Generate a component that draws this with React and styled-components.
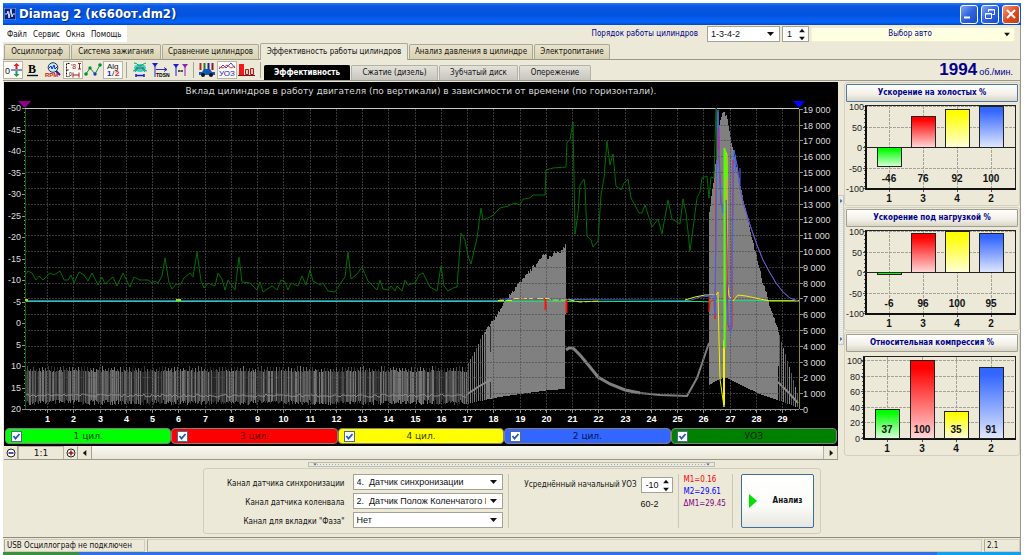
import React, { useState } from 'react';
import styled, { createGlobalStyle } from 'styled-components';

const small = "8px/12px 'DejaVu Sans Condensed', 'DejaVu Sans', Tahoma, sans-serif";

const GlobalStyle = createGlobalStyle`
  * {
    box-sizing: border-box;
  }
  body {
    margin: 0;
    background: #fff;
    font-family: 'Liberation Sans', Arial, sans-serif;
    font-size: 9px;
    line-height: 12px;
    color: #111;
  }
  button, input, select {
    font: inherit;
    color: inherit;
    margin: 0;
    padding: 0;
    border: 0;
    border-radius: 0;
  }
`;

const Window = styled.div`
  display: flex;
  flex-direction: column;
  min-height: 100vh;
  padding: 3px 3px 0;
  background: #fff;
`;

const TitleBar = styled.header`
  display: flex;
  align-items: center;
  gap: 3px;
  height: 22px;
  padding: 0 1px;
  background: linear-gradient(#2a7df5 0, #0a57e0 3px, #0353de 12px, #0564fc 19px, #0246c4 22px);
`;

const Title = styled.h1`
  flex: 1;
  margin: 0;
  color: #fff;
  font: bold 13px/20px 'DejaVu Sans Condensed', 'DejaVu Sans', sans-serif;
  text-shadow: 1px 1px 1px #0a2d80;
`;

const WindowButton = styled.button`
  display: flex;
  align-items: center;
  justify-content: center;
  width: 18px;
  height: 19px;
  border: 1px solid #fff;
  border-radius: 3px;
  background: ${props => (props.$close ? 'linear-gradient(135deg, #f09a7c, #dd4f26 50%, #c23a12)' : 'linear-gradient(135deg, #7ea4f4, #2f63dd 50%, #1c4cc4)')};
`;

const Body = styled.div`
  display: flex;
  flex-direction: column;
  flex: 1;
  background: #ece9d8;
  border-right: 1px solid #9a988c;
`;

const MenuRow = styled.div`
  display: flex;
  align-items: flex-start;
  height: 18px;
`;

const Menu = styled.nav`
  display: flex;
  align-items: center;
  gap: 6px;
  width: 124px;
  height: 17px;
  padding: 2px 4px 0;
  background: #fff;
  font: ${small};
`;

const MenuItem = styled.button`
  background: none;
  white-space: nowrap;
`;

const MenuTools = styled.div`
  display: flex;
  flex: 1;
  justify-content: flex-end;
  align-items: center;
  gap: 2px;
  height: 16px;
  padding: 2px 5px 0 0;
`;

const OrderLabel = styled.label`
  margin-right: 7px;
  color: #00008b;
  font: ${small};
`;

const SelectBox = styled.div`
  display: grid;
  align-items: center;
  width: ${props => props.$width};
  height: 16px;
  border: 1px solid #a5a294;
  background: #fff;

  & > * {
    grid-area: 1 / 1;
  }
  svg {
    justify-self: end;
    margin-right: 5px;
    pointer-events: none;
  }
`;

const Select = styled.select`
  appearance: none;
  width: 100%;
  height: 14px;
  padding: 0 16px 0 3px;
  background: none;
  text-overflow: clip;
`;

const SpinBox = styled.div`
  display: flex;
  align-items: center;
  width: ${props => props.$width};
  height: 16px;
  padding: 0 3px 0 4px;
  border: 1px solid #a5a294;
  background: #fff;
`;

const SpinInput = styled.input`
  flex: 1;
  min-width: 0;
  background: none;
`;

const SpinButtons = styled.div`
  display: flex;
  flex-direction: column;
  gap: 3px;
`;

const SpinButton = styled.button`
  display: flex;
  background: none;
`;

const CarButton = styled.button`
  display: flex;
  align-items: center;
  width: 204px;
  height: 15px;
  padding: 0 4px;
  background: #ffffe1;
  border: 1px solid #f3f0d0;
  border-radius: 2px;
  color: #00008b;
  font: ${small};

  span {
    flex: 1;
  }
`;

const TabBar = styled.div`
  display: flex;
  align-items: flex-end;
  gap: 1px;
  height: 17px;
  padding-left: 1px;
  border-bottom: 1px solid #9a988c;
`;

const Tab = styled.button`
  width: ${props => props.$width};
  height: ${props => (props.$active ? '17px' : '15px')};
  margin-bottom: ${props => (props.$active ? '-1px' : '0')};
  border: 1px solid #aaa798;
  border-bottom: 0;
  border-radius: 2px 2px 0 0;
  background: ${props => (props.$active ? '#ece9d8' : 'linear-gradient(#e9e4cd, #d8d1b0)')};
  font: ${small};
  white-space: nowrap;
`;

const Toolbar = styled.div`
  display: flex;
  align-items: stretch;
  height: 21px;
  border-bottom: 1px solid #9a988c;
`;

const Tool = styled.button`
  display: flex;
  align-items: center;
  justify-content: center;
  width: 20px;
  height: 18px;
  margin-top: 1px;
  background: ${props => (props.$pressed ? '#faf9f4' : 'none')};
  border: 1px solid ${props => (props.$pressed ? '#b9b6a6' : 'transparent')};
`;

const Divider = styled.div`
  width: 1px;
  margin: 2px 3px;
  background: #a8a597;
`;

const SubTabs = styled.div`
  display: flex;
  align-items: flex-end;
  gap: 1px;
  flex: 1;
`;

const SubTab = styled.button`
  width: ${props => props.$width};
  height: 15px;
  border: 1px solid ${props => (props.$active ? '#000' : '#b4b2a8')};
  border-bottom: 0;
  border-radius: 2px 2px 0 0;
  background: ${props => (props.$active ? '#000' : 'linear-gradient(#e2e1da, #c6c5be)')};
  color: ${props => (props.$active ? '#fff' : '#111')};
  font: ${small};
  font-weight: ${props => (props.$active ? 'bold' : 'normal')};
  white-space: nowrap;
`;

const Rpm = styled.div`
  display: flex;
  align-items: baseline;
  gap: 2px;
  padding-right: 7px;
  color: #00008b;
  font-size: 9px;
  line-height: 20px;

  strong {
    font-size: 17px;
  }
`;

const Columns = styled.div`
  display: flex;
  align-items: flex-start;
  padding: 1px 0 0 1px;
`;

const ChartColumn = styled.main`
  flex: 1;
  min-width: 0;
  border-bottom: 1px solid #9a988c;
`;

const ChartPanel = styled.section`
  background: #000;
`;

const ChartTitle = styled.h2`
  height: 18px;
  margin: 0;
  color: #d8d8d8;
  font: 9px/18px 'DejaVu Sans', Verdana, sans-serif;
  text-align: center;
  white-space: nowrap;
`;

const ChartSvg = styled.svg`
  display: block;
  width: 100%;
`;

const Legend = styled.div`
  display: grid;
  grid-template-columns: repeat(5, 1fr);
  padding: 0 1px 2px;
`;

const LegendItem = styled.label`
  display: flex;
  align-items: center;
  height: 16px;
  padding: 0 16px 0 5px;
  border: 1px solid #808080;
  border-radius: 4px;
  background: ${props => props.$color};
  color: ${props => props.$text};
  font: 9px/14px 'DejaVu Sans', Verdana, sans-serif;

  span {
    flex: 1;
    text-align: center;
  }
`;

const Check = styled.input`
  appearance: none;
  width: 11px;
  height: 11px;
  border: 1px solid #506a96;
  background: #fff;

  &:checked {
    background-image: url("data:image/svg+xml,%3Csvg xmlns='http://www.w3.org/2000/svg' viewBox='0 0 9 9'%3E%3Cpath d='M1.5 4l2 2.5L7.500 2' fill='none' stroke='%232458b8' stroke-width='1.8'/%3E%3C/svg%3E");
  }
`;

const ScrollRow = styled.div`
  display: flex;
  height: 13px;
  background: #f1efe4;
`;

const ScaleBox = styled.output`
  width: 46px;
  border: 1px solid #b5b2a3;
  border-width: 1px 1px 0;
  background: #ece9d8;
  font: 9px/13px 'DejaVu Sans', sans-serif;
  text-align: center;
`;

const ScrollButton = styled.button`
  display: flex;
  align-items: center;
  justify-content: center;
  width: 14px;
  border: 1px solid #a5a294;
  border-width: 0 1px 0 0;
  background: #ece9d8;
`;

const ScrollTrack = styled.div`
  flex: 1;
  border: 1px solid #b5b2a3;
  border-width: 0 1px 0 0;
  background: linear-gradient(#fbfaf4, #e9e6d6);
`;

const SideGrip = styled.div`
  align-self: flex-start;
  display: flex;
  flex-direction: column;
  align-items: center;
  justify-content: space-between;
  width: 6px;
  height: 150px;
  margin-top: 113px;
  padding: 3px 0;
  border: 1px solid #cbc8b8;
  background: repeating-linear-gradient(#f4f3ea 0, #f4f3ea 1px, #dde3e6 1px, #dde3e6 2px);
`;

const Sidebar = styled.aside`
  display: flex;
  flex-direction: column;
  gap: 1px;
  width: 176px;
`;

const BarCard = styled.section`
  padding: 1px 1px 0;
  border: 1px solid #d3d0bf;
  border-radius: 3px;
`;

const BarTitle = styled.button`
  display: block;
  width: 100%;
  height: 18px;
  border: 1px solid ${props => (props.$focused ? '#4d7aa3' : '#a09e90')};
  border-radius: 1px;
  background: linear-gradient(#fff, #f1efe6 60%, #d9d6c6);
  color: #00008b;
  font: bold ${small};
`;

const Bottom = styled.div`
  display: flex;
  flex-direction: column;
  align-items: center;
  flex: 1;
  padding: 2px 0;
  border-bottom: 1px solid #8d8b80;
`;

const Grip = styled.div`
  display: flex;
  align-items: center;
  justify-content: space-between;
  width: 407px;
  height: 5px;
  padding: 0 4px;
  border: 1px solid #c0bdae;
  background: repeating-linear-gradient(90deg, #8fb0dc 0, #8fb0dc 1px, #ece9d8 1px, #ece9d8 3px) center / 390px 1px no-repeat;
`;

const Settings = styled.form`
  display: flex;
  align-items: stretch;
  gap: 5px;
  height: 66px;
  margin-top: 1px;
  padding: 5px 6px;
  border: 1px solid #d0cdbc;
  border-radius: 3px;
`;

const Channels = styled.div`
  display: grid;
  grid-template-columns: 135px 150px;
  grid-auto-rows: 16px;
  gap: 3px 8px;
  align-items: center;

  label {
    text-align: right;
    padding-top: 3px;
    font: ${small};
    white-space: nowrap;
  }
`;

const Rule = styled.div`
  width: 1px;
  background: #cbc8b7;
`;

const Advance = styled.div`
  display: grid;
  grid-template-columns: 123px 32px;
  grid-auto-rows: 18px;
  gap: 1px 4px;
  align-content: start;
  align-items: center;
  padding-top: 2px;

  label {
    text-align: right;
    font: ${small};
    white-space: nowrap;
  }
`;

const ToothCount = styled.span`
  grid-column: 2;
`;

const Markers = styled.div`
  width: 43px;
  font: ${small};
`;

const Marker = styled.div`
  color: ${props => props.$color};
`;

const RunButton = styled.button`
  display: flex;
  align-items: center;
  justify-content: space-between;
  width: 73px;
  height: 54px;
  margin-left: 3px;
  padding: 0 10px 0 7px;
  border: 1px solid #3f6d9b;
  border-radius: 2px;
  background: linear-gradient(#fff, #fbfbf8 60%, #e6e6df);
  font: bold ${small};
`;

const StatusBar = styled.footer`
  display: flex;
  gap: 2px;
  height: 14px;
  padding: 1px 0 0 1px;
`;

const StatusCell = styled.div`
  flex: ${props => (props.$width ? '0 0 auto' : '1')};
  width: ${props => props.$width};
  padding-left: 2px;
  border: 1px solid #d0cdbc;
  border-left-color: #aaa798;
  font: ${small};
  white-space: nowrap;
`;

const Taskbar = styled.div`
  display: flex;
  height: 3px;
  background: #2f72e0;
`;

const StartEdge = styled.div`
  width: 76px;
  background: #3c8f3c;
  border-radius: 0 4px 0 0;
`;

const TrayEdge = styled.div`
  width: 84px;
  margin-left: auto;
  background: #12a0ee;
`;

const Arrow = ({ dir = 'down', color = '#111', size = 7 }) => {
  const shapes = {
    down: '0,1 7,1 3.5,5',
    up: '0,5 7,5 3.5,1',
    left: '5,0 5,7 1,3.5',
    right: '2,0 2,7 6,3.5',
  };
  const flat = dir === 'down' || dir === 'up';
  return (
    <svg width={size} height={flat ? size - 1 : size} viewBox={flat ? '0 0 7 6' : '0 0 7 7'}>
      <polygon points={shapes[dir]} fill={color} />
    </svg>
  );
};

const Spinner = ({ id, label, initial, width }) => {
  const [value, setValue] = useState(initial);
  return (
    <SpinBox $width={width}>
      <SpinInput id={id} aria-label={label} value={value} onChange={e => setValue(e.target.value)} />
      <SpinButtons>
        <SpinButton type="button" aria-label="+" onClick={() => setValue(Number(value) + 1)}><Arrow dir="up" size={6} /></SpinButton>
        <SpinButton type="button" aria-label="-" onClick={() => setValue(Number(value) - 1)}><Arrow size={6} /></SpinButton>
      </SpinButtons>
    </SpinBox>
  );
};

const Dropdown = ({ id, options, width }) => (
  <SelectBox $width={width}>
    <Select id={id}>
      {options.map(option => <option key={option}>{option}</option>)}
    </Select>
    <Arrow />
  </SelectBox>
);

// toolbar icons, each on an 18x16 grid
const icons = {
  zero: (
    <>
      <text x="1" y="12" fontSize="9" fill="#222">0</text>
      <path d="M7 8h11" stroke="#1a1ab0" />
      <path d="M12.500 1l3 3h-2v3h-2v-3h-2z" fill="#e02020" />
      <path d="M12.500 15l3-3h-2v-3h-2v3h-2z" fill="#10a050" />
    </>
  ),
  bold: (
    <>
      <text x="4" y="11" fontSize="12" fontWeight="bold" fontFamily="Liberation Serif">B</text>
      <path d="M3 13.500h11" stroke="#111" strokeWidth="1.4" />
    </>
  ),
  rpm: (
    <>
      <circle cx="9" cy="5.500" r="4.800" fill="#bfeeff" stroke="#234" />
      <path d="M5 6l2-2 1 3 2-4 1 4 2-2" fill="none" stroke="#2020d0" />
      <path d="M12 9l4 4" stroke="#202090" strokeWidth="2" />
      <text x="1" y="15" fontSize="6" fontWeight="bold" fill="#d01818">RPM</text>
    </>
  ),
  range: (
    <>
      <path d="M5.500 1.500h-3v13h3M2.500 8h2" fill="none" stroke="#111" strokeDasharray="2 1" />
      <text x="7" y="7" fontSize="7" fill="#a02020">'8</text>
      <path d="M9 10.500v5M15 10.500v5M9 13h6M15.500 1v6M14 1.500h3M14 7h3" stroke="#a02020" fill="none" />
      <text x="5" y="14" fontSize="5">0</text>
    </>
  ),
  line: (
    <>
      <path d="M2 12l4-6 5 6 5-9" fill="none" stroke="#109040" />
      <circle cx="2" cy="12" r="1.800" fill="#0a8a3a" />
      <circle cx="6" cy="6" r="1.700" fill="#0a8a3a" />
      <circle cx="11" cy="12" r="1.700" fill="#1b3fb0" />
      <circle cx="16" cy="3" r="1.800" fill="#0a8a3a" />
    </>
  ),
  alg: (
    <>
      <text x="3" y="7" fontSize="8" fill="#111">Alg</text>
      <text x="3" y="14" fontSize="8" fontWeight="bold" fill="#2020c0">1</text>
      <text x="8" y="14" fontSize="8" fill="#111">/</text>
      <text x="11" y="14" fontSize="8" fontWeight="bold" fill="#e02020">2</text>
    </>
  ),
  compare: (
    <>
      <ellipse cx="9" cy="6" rx="6" ry="4" fill="#28d8d0" />
      <path d="M3 1q3 0 4 2t4 0 4-2M2 9q3 0 4-4M16 9q-3 0-4-4M4 10l3-4M14 10l-3-4" fill="none" stroke="#109a60" />
      <path d="M6 6h6" stroke="#e02020" />
      <path d="M5 12v3M13 12v3M5 13.500h8" stroke="#1a1ad0" strokeWidth="1.500" />
    </>
  ),
  tdsn: (
    <>
      <path d="M1 1h6l-3 4z" fill="#1c1cd8" />
      <path d="M4 3v12M5 7.500h10M13 5.500l3 2-3 2" fill="none" stroke="#2a2ac0" />
      <text x="5" y="15" fontSize="5" fontWeight="bold">TDSN</text>
    </>
  ),
  markers: (
    <>
      <path d="M2 2h6l-3 4z" fill="#1c1cd8" />
      <path d="M11 2h6l-3 4z" fill="#9020b8" />
      <path d="M5 4v10" stroke="#1c1cd8" />
      <path d="M14 4v10" stroke="#9020b8" />
      <path d="M7 9h5M8 8v2M11 8v2" stroke="#222" />
    </>
  ),
  car: (
    <>
      <path d="M2.500 1v7" stroke="#c02020" strokeWidth="2" />
      <path d="M6.500 1v7" stroke="#208020" strokeWidth="2" />
      <path d="M10.500 1v7" stroke="#2020a0" strokeWidth="2" />
      <path d="M14.500 1v7" stroke="#802020" strokeWidth="2" />
      <path d="M1 13v-3h3l2-3h6l2 3h3v3z" fill="#1258b8" />
      <circle cx="5" cy="13" r="2" fill="#111" />
      <circle cx="13" cy="13" r="2" fill="#111" />
    </>
  ),
  uoz: (
    <>
      <path d="M1 7l4-4 3 3 5-5 4 5" fill="none" stroke="#3050e0" />
      <path d="M1 5l4 1 4-3 4 3 4-2" fill="none" stroke="#e04040" />
      <text x="1" y="14" fontSize="8" fill="#2020b0">УОЗ</text>
    </>
  ),
  bars: (
    <>
      <path d="M1 2h5v11h-5z" fill="#f01818" />
      <path d="M7.500 7.500h3v5h-3zM12.500 6.500h3v6h-3z" fill="#f0c0b8" stroke="#a02020" />
      <path d="M0 13.500h17" stroke="#801010" />
    </>
  ),
};

const IconSvg = styled.svg`
  flex: none;
  overflow: visible;
`;

const ToolIcon = ({ name }) => (
  <IconSvg width="18" height="16" viewBox="0 0 18 16">{icons[name]}</IconSvg>
);

// value -> plot coordinates
const timeX = t => Math.round(20.8 + 26.25 * t) + 0.5;
const levelY = v => 323 + 4.3 * v;
const rpmY = v => Math.round(409 - v * 0.0158) + 0.5;

const range = (from, to, step = 1) => {
  const list = [];
  for (let i = from; i <= to; i += step) list.push(i);
  return list;
};

const interpolate = (points, x) => {
  for (let i = 1; i < points.length; i++) {
    const [x0, y0] = points[i - 1];
    const [x1, y1] = points[i];
    if (x <= x1) return y0 + ((y1 - y0) * (x - x0)) / (x1 - x0);
  }
  return points[points.length - 1][1];
};

const noise = n => {
  const v = Math.sin(n * 12.9898) * 43758.5453;
  return v - Math.floor(v);
};

const advance = `25,275 28,271 32,273 36,280 39,276 43,280 50,273 54,275 60,271 64,280 68,280 71,275 74,283 79,272 84,275 88,281
  92,273 98,285 102,277 105,284 113,277 117,286 123,273 130,287 134,277 140,280 148,280 152,283 155,281 158,283 162,276 165,258
  169,283 172,289 176,284 180,285 184,278 190,273 193,277 197,252 201,281 204,288 208,283 215,286 218,273 222,279 225,290 228,280
  235,290 239,257 242,282 250,283 257,290 260,282 263,292 272,286 277,290 281,280 285,282 288,290 291,283 298,286 302,276 306,285
  310,270 313,281 320,285 323,283 328,291 335,292 340,284 345,277 348,252 351,279 357,274 362,267 368,281 377,290 380,280 383,289
  388,290 391,286 395,291 397,286 402,291 405,280 408,285 415,283 419,275 423,273 430,287 437,291 441,266 444,286 448,291 453,288
  457,287 461,233 465,240 468,256 471,264 477,238 481,208 483,220 492,216 500,208 508,206 515,203 520,205 523,199 530,198 533,195
  545,195 546,170 553,168 566,167 567,142 570,140 573,122 575,234 578,213 580,185 584,179 585,186 587,236 591,240 593,247 598,241
  601,195 604,178 607,141 610,165 613,154 616,186 621,190 624,183 628,179 631,198 639,213 642,213 645,205 652,227 658,219 662,234
  668,200 672,219 680,224 683,199 686,213 690,251 697,198 700,192 702,178 707,176 709,198 711,177 714,178 716,108`;

const firstTop = [[467, 365], [475, 350], [482, 335], [492, 321], [500, 309], [508, 296], [520, 282], [530, 270], [540, 260], [545, 253], [547, 259], [553, 253], [562, 250], [566, 243]];
const firstBottom = [[467, 404], [480, 401], [500, 397], [520, 394], [550, 390], [566, 389]];
const secondTop = [[709, 212], [712, 190], [715, 164], [717, 132], [720, 119], [723, 111], [727, 119], [730, 138], [735, 160], [740, 185], [750, 232], [763, 285], [778, 332], [790, 370], [799, 400]];
const secondBottom = [[709, 385], [716, 381], [725, 377], [731, 380], [745, 387], [760, 394], [780, 401], [799, 408]];

const hump = (top, bottom, from, to) => {
  const upper = range(from, to).map(x => {
    const y = Math.round(interpolate(top, x) + noise(x) * 4 - 2);
    return `${x},${y} ${x + 1},${y}`;
  });
  const lower = range(from, to, 3).reverse().map(x => `${x},${interpolate(bottom, x)}`);
  return [...upper, ...lower].join(' ');
};

const comb = range(26, 468).map(x => ({
  x,
  top: x % 3 === 0 ? 366 + Math.round(noise(x) * 3) : 370 + Math.round(noise(x) * 2),
  bottom: 400 + Math.round(noise(x + 7) * 5),
  shade: ['#383838', '#747474', '#4a4a4a', '#262626', '#606060'][Math.floor(noise(x * 3) * 5)],
}));

const coast = 'L737 165L740 188L743 202L750 225L757 245L763 260L770 273L776 283L783 292L790 298L798 301';

const Oscillogram = () => (
  <ChartSvg viewBox="4 100 834 328" fontFamily="Liberation Sans" fontSize="9">
    <g shapeRendering="crispEdges">
      {comb.map(line => (
        <path key={line.x} d={`M${line.x + 0.5} ${line.top}V${line.bottom}`} stroke={line.shade} />
      ))}
      {range(468, 492, 2).map(x => (
        <path key={x} d={`M${x + 0.5} ${interpolate(firstTop, x)}V${interpolate(firstBottom, x)}`} stroke={x % 4 ? '#808080' : '#5c5c5c'} />
      ))}
      <polygon points={hump(firstTop, firstBottom, 484, 565)} fill="#808080" />
      <polygon points={hump(secondTop, secondBottom, 709, 778)} fill="#808080" />
      {range(779, 798, 2).map(x => (
        <path key={x} d={`M${x + 0.5} ${interpolate(secondTop, x)}V${interpolate(secondBottom, x)}`} stroke={x % 3 ? '#5c5c5c' : '#8a8a8a'} />
      ))}
      <path d="M485.500 334V400M490.500 326V352M490.500 382V398" stroke="#303030" />
    </g>
    <polyline points={range(26, 466, 2).map(x => `${x},${395 + Math.round(noise(x) * 3 - 1)}`).join(' ')} fill="none" stroke="#8a8a8a" />
    <path d="M466 395L478 387L490 380" fill="none" stroke="#8a8a8a" strokeWidth="2" />
    <path d="M566 350L569 348L573 348L580 355L590 367L598 377L610 384L625 390L640 393" fill="none" stroke="#808080" strokeWidth="3" />
    <path d="M625 390L640 393L660 395L687 396L697 378L709 343" fill="none" stroke="#808080" strokeWidth="2" />
    <path d="M778 382L788 392L798 403" fill="none" stroke="#8a8a8a" strokeWidth="2" />

    <g stroke="#505050" strokeOpacity="0.700" strokeDasharray="2 1" shapeRendering="crispEdges">
      {range(1, 29).map(t => <path key={t} d={`M${timeX(t)} 109V409`} />)}
      {range(1000, 18000, 1000).map(v => <path key={v} d={`M25 ${rpmY(v)}H799`} />)}
    </g>

    <g stroke="#909090" shapeRendering="crispEdges">
      <path d="M25 108.500H799" stroke="#c8c8c8" />
      <path d="M25 409.500H799" />
      {range(1, 29).map(t => <path key={t} d={`M${timeX(t)} 409V413`} />)}
      {range(30, 798, 5).map(x => <path key={x} d={`M${x + 0.5} 410V411`} />)}
      {range(-50, 20, 5).map(v => <path key={v} d={`M22 ${Math.round(levelY(v)) + 0.5}H25`} />)}
      {range(-50, 20).map(v => <path key={v} d={`M24 ${Math.round(levelY(v)) + 0.5}H25`} />)}
      {range(0, 19000, 1000).map(v => <path key={v} d={`M800 ${rpmY(v)}H803`} />)}
      <path d="M25.500 109V409" stroke="#006400" />
      <path d="M799.500 109V409" stroke="#8c8c20" />
    </g>

    <g fill="#dcdcdc">
      {range(-50, 20, 5).map(v => (
        <text key={v} x="21" y={levelY(v) + 3} textAnchor="end">{v}</text>
      ))}
      {range(0, 19000, 1000).map(v => (
        <text key={v} x="803" y={rpmY(v) + 3}>{v >= 1000 ? `${v / 1000} 000` : v}</text>
      ))}
      {range(1, 29).map(t => (
        <text key={t} x={timeX(t)} y="422" textAnchor="middle" fontWeight="bold" fill="#fff">{t}</text>
      ))}
    </g>

    <g fill="none" strokeWidth="1">
      <polyline points={advance} stroke="#007000" />
      <path d="M26 300.500H498L505 299L690 300.500L700 297L712 296" stroke="#4060d8" />
      <path d="M26 301.500H700L712 302L720 300.500H799" stroke="#10e070" />
      <path d="M498 300.500H512L514 298.500H549L551 300H570L580 302L600 301" stroke="#f0e000" strokeDasharray="6 2" />
      <path d="M500 299.500L520 298L545 299" stroke="#f02020" strokeDasharray="2 9" />
      <path d="M545.500 299V310M566.500 300V313" stroke="#ff1010" strokeWidth="2" />
      <path d="M685 300L695 297L705 295H716L718 292L719 340L720 379L724 407V370L725 320V150L727 155V280L729 296L733 301L738 295L746 296L760 299L770 301H799" stroke="#f0f000" />
      <path d={`M709 296V312L710 302L714 300L715 319L716 190L718 112L719 150L720 180L721 205L723 207L726 200L727 255L728 325L730 331L732 328V250L733 190V160${coast}`} stroke="#f01818" />
      <path d={`M705 295L715 296V315L716 240L717 140L718 110L719 160L721 200L723 213L724 201L726 200V290L728 320L731 333L732 270L734 150${coast}`} stroke="#3868ff" />
      <path d="M740 168V185M735.500 155V172" stroke="#3868ff" />
      <path d="M724 340V405" stroke="#f0f000" strokeWidth="2" />
      <path d="M724.500 148V348M725 150L727 178" stroke="#50ff00" strokeWidth="2" />
      <path d="M716.500 160V108" stroke="#007000" />
      <path d="M719 127V150" stroke="#d010c0" />
    </g>
    <path d="M176 300H181M25 300H28" stroke="#c0d000" strokeWidth="2" />
    <polygon points="18,101 31,101 25,108" fill="#900090" />
    <polygon points="793,101 805,101 799,108" fill="#0000ff" />
  </ChartSvg>
);

const barColors = ['#00ff00', '#ff0000', '#ffff00', '#3366ff'];
const cylinders = [1, 3, 4, 2];

const BarChart = ({ id, values, signed }) => {
  const left = signed ? 19 : 17;
  const zero = signed ? 45 : 86;
  const top = signed ? 4 : 5;
  const scale = signed ? 0.41 : 0.78;
  const bottom = 86;
  const ticks = signed ? [100, 50, 0, -50, -100] : [100, 80, 60, 40, 20, 0];
  const centers = signed ? [43, 77, 111, 145] : [41, 76, 110, 145];
  const barTop = v => (v < 0 ? zero : zero - Math.round(v * scale)) + 0.5;
  const barHeight = v => Math.max(2, Math.round(Math.abs(v) * scale));
  return (
    <ChartSvg viewBox="0 0 172 103" fontFamily="Liberation Sans" fontSize="9">
      <defs>
        {barColors.map((color, i) => (
          <linearGradient key={color} id={`${id}${i}`} x1="0" y1="0" x2="0" y2="1">
            <stop offset="0.100" stopColor={color} />
            <stop offset="1" stopColor={color} stopOpacity="0.150" />
          </linearGradient>
        ))}
      </defs>
      <g shapeRendering="crispEdges">
        <g stroke="#a5a398" strokeDasharray="3 1">
          {ticks.map(v => <path key={v} d={`M${left} ${Math.round(zero - v * scale) + 0.5}H169`} />)}
          {centers.map(x => <path key={x} d={`M${x + 0.5} ${top}V${bottom}`} />)}
        </g>
        <g stroke="#555">
          {ticks.map(v => <path key={v} d={`M${left - 2} ${Math.round(zero - v * scale) + 0.5}H${left}`} />)}
          {range(top + 4, bottom, 4).map(y => <path key={y} d={`M${left - 1} ${y + 0.5}H${left}`} />)}
          {range(left + 8, 169, 8).map(x => <path key={x} d={`M${x + 0.5} ${bottom}V${bottom + 2}`} />)}
          {centers.map(x => <path key={x} d={`M${x + 0.5} ${bottom}V${bottom + 4}`} />)}
        </g>
        <rect x={left + 0.5} y={top - 0.5} width={169 - left} height={bottom - top + 1} fill="none" stroke="#222" />
        <path d={`M${left + 0.5} ${top}V${bottom + 0.5}H170`} fill="none" stroke="#111" strokeWidth="2" />
        {signed && <path d={`M${left} ${zero + 0.5}H169`} stroke="#222" />}
        {values.map((v, i) => (
          <g key={i}>
            <rect x={centers[i] - 11.5} y={barTop(v)} width="24" height={barHeight(v)} fill="#fff" />
            <rect x={centers[i] - 11.5} y={barTop(v)} width="24" height={barHeight(v)} fill={v > -10 && v < 0 ? barColors[i] : `url(#${id}${i})`} stroke="#222" />
          </g>
        ))}
      </g>
      <g fill="#222">
        {ticks.map(v => (
          <text key={v} x={Math.abs(v) === 100 ? left - 1 : left - 3} y={Math.round(zero - v * scale) + 4} textAnchor="end">{v}</text>
        ))}
      </g>
      <g textAnchor="middle" fontWeight="bold" fontSize="10" fill="#111">
        {values.map((v, i) => <text key={i} x={centers[i]} y={signed ? 80 : 81}>{v}</text>)}
        {cylinders.map((c, i) => <text key={c} x={centers[i]} y="100">{c}</text>)}
      </g>
    </ChartSvg>
  );
};

const menuItems = ['Файл', 'Сервис', 'Окна', 'Помощь'];

const tabs = [
  ['Осциллограф', '66px'],
  ['Система зажигания', '90px'],
  ['Сравнение цилиндров', '97px'],
  ['Эффективность работы цилиндров', '148px'],
  ['Анализ давления в цилиндре', '124px'],
  ['Электропитание', '76px'],
];

const subTabs = [
  ['Эффективность', '86px'],
  ['Сжатие (дизель)', '87px'],
  ['Зубчатый диск', '79px'],
  ['Опережение', '72px'],
];

const legend = [
  ['1 цил.', '#00ff00', '#003c00'],
  ['3 цил.', '#ff0000', '#5a0000'],
  ['4 цил.', '#ffff00', '#3c3c00'],
  ['2 цил.', '#3366ff', '#001450'],
  ['УОЗ', '#008000', '#002000'],
];

const App = () => {
  const [tab, setTab] = useState(3);
  const [subTab, setSubTab] = useState(0);

  return (
    <>
      <GlobalStyle />
      <Window>
        <TitleBar>
          <svg width="12" height="12" viewBox="0 0 12 12">
            <rect width="12" height="12" fill="#0a1f80" stroke="#9db8f0" />
            <path d="M1 6h2l1-3 1 7 2-9 1 8 1-3h2" fill="none" stroke="#d8e8ff" />
          </svg>
          <Title>Diamag 2 (к660от.dm2)</Title>
          <WindowButton aria-label="Свернуть">
            <svg width="12" height="12"><path d="M1 9.500h6" stroke="#fff" strokeWidth="2" /></svg>
          </WindowButton>
          <WindowButton aria-label="Восстановить">
            <svg width="12" height="12">
              <path d="M4.500 4V1.500h6v5h-2M4 2h7" fill="none" stroke="#fff" />
              <path d="M1.500 5.500h6v5h-6zM1 6h7" fill="none" stroke="#fff" />
            </svg>
          </WindowButton>
          <WindowButton $close aria-label="Закрыть">
            <svg width="12" height="12"><path d="M2 2l8 8M10 2l-8 8" stroke="#fff" strokeWidth="2" /></svg>
          </WindowButton>
        </TitleBar>

        <Body>
          <MenuRow>
            <Menu>
              {menuItems.map(item => <MenuItem key={item}>{item}</MenuItem>)}
            </Menu>
            <MenuTools>
              <OrderLabel htmlFor="order">Порядок работы цилиндров</OrderLabel>
              <Dropdown id="order" width="73px" options={['1-3-4-2', '1-2-4-3']} />
              <Spinner label="Цилиндр" initial="1" width="27px" />
              <CarButton><span>Выбор авто</span><Arrow size={6} /></CarButton>
            </MenuTools>
          </MenuRow>

          <TabBar>
            {tabs.map(([name, width], i) => (
              <Tab key={name} $width={width} $active={tab === i} onClick={() => setTab(i)}>{name}</Tab>
            ))}
          </TabBar>

          <Toolbar>
            <Tool $pressed aria-label="Ноль"><ToolIcon name="zero" /></Tool>
            <Tool aria-label="Толщина"><ToolIcon name="bold" /></Tool>
            <Tool aria-label="Обороты"><ToolIcon name="rpm" /></Tool>
            <Tool $pressed aria-label="Шкала"><ToolIcon name="range" /></Tool>
            <Tool aria-label="Точки"><ToolIcon name="line" /></Tool>
            <Tool $pressed aria-label="Алгоритм"><ToolIcon name="alg" /></Tool>
            <Divider />
            <Tool aria-label="Наложение"><ToolIcon name="compare" /></Tool>
            <Tool aria-label="Период"><ToolIcon name="tdsn" /></Tool>
            <Tool aria-label="Маркеры"><ToolIcon name="markers" /></Tool>
            <Divider />
            <Tool aria-label="Авто"><ToolIcon name="car" /></Tool>
            <Tool $pressed aria-label="УОЗ"><ToolIcon name="uoz" /></Tool>
            <Tool aria-label="Диаграммы"><ToolIcon name="bars" /></Tool>
            <Divider />
            <SubTabs>
              {subTabs.map(([name, width], i) => (
                <SubTab key={name} $width={width} $active={subTab === i} onClick={() => setSubTab(i)}>{name}</SubTab>
              ))}
            </SubTabs>
            <Rpm><strong>1994</strong>об./мин.</Rpm>
          </Toolbar>

          <Columns>
            <ChartColumn>
              <ChartPanel>
                <ChartTitle>Вклад цилиндров в работу двигателя (по вертикали) в зависимости от времени (по горизонтали).</ChartTitle>
                <Oscillogram />
                <Legend>
                  {legend.map(([name, color, text]) => (
                    <LegendItem key={name} $color={color} $text={text}>
                      <Check type="checkbox" defaultChecked />
                      <span>{name}</span>
                    </LegendItem>
                  ))}
                </Legend>
              </ChartPanel>
              <ScrollRow>
                <ScrollButton aria-label="Уменьшить">
                  <svg width="10" height="10"><circle cx="5" cy="5" r="4" fill="#fff" stroke="#222" /><path d="M2.500 5h5" stroke="#1010a0" strokeWidth="1.500" /></svg>
                </ScrollButton>
                <ScaleBox>1:1</ScaleBox>
                <ScrollButton aria-label="Увеличить">
                  <svg width="10" height="10"><circle cx="5" cy="5" r="4" fill="#fff" stroke="#222" /><path d="M2.500 5h5M5 2.500v5" stroke="#a01010" strokeWidth="1.500" /></svg>
                </ScrollButton>
                <ScrollButton aria-label="Влево"><Arrow dir="left" size={6} /></ScrollButton>
                <ScrollTrack />
                <ScrollButton aria-label="Вправо"><Arrow dir="right" size={6} /></ScrollButton>
              </ScrollRow>
            </ChartColumn>
            <SideGrip>
              <Arrow dir="right" color="#2a62c8" size={4} />
              <Arrow dir="right" color="#2a62c8" size={4} />
            </SideGrip>
            <Sidebar>
              <BarCard>
                <BarTitle $focused>Ускорение на холостых %</BarTitle>
                <BarChart id="idle" signed values={[-46, 76, 92, 100]} />
              </BarCard>
              <BarCard>
                <BarTitle>Ускорение под нагрузкой %</BarTitle>
                <BarChart id="load" signed values={[-6, 96, 100, 95]} />
              </BarCard>
              <BarCard>
                <BarTitle>Относительная компрессия %</BarTitle>
                <BarChart id="compression" values={[37, 100, 35, 91]} />
              </BarCard>
            </Sidebar>
          </Columns>

          <Bottom>
            <Grip>
              <Arrow color="#2a62c8" size={4} />
              <Arrow color="#2a62c8" size={4} />
            </Grip>
            <Settings onSubmit={e => e.preventDefault()}>
              <Channels>
                <label htmlFor="sync">Канал датчика синхронизации</label>
                <Dropdown id="sync" width="150px" options={['4.\u00a0 Датчик синхронизации']} />
                <label htmlFor="crank">Канал датчика коленвала</label>
                <Dropdown id="crank" width="150px" options={['2.\u00a0 Датчик Полож Коленчатого Вала']} />
                <label htmlFor="phase">Канал для вкладки "Фаза"</label>
                <Dropdown id="phase" width="150px" options={['Нет']} />
              </Channels>
              <Rule />
              <Advance>
                <label htmlFor="uoz">Усреднённый начальный УОЗ</label>
                <Spinner id="uoz" initial="-10" width="32px" />
                <ToothCount>60-2</ToothCount>
              </Advance>
              <Rule />
              <Markers>
                <Marker $color="#ff0000">M1=0.16</Marker>
                <Marker $color="#0000ff">M2=29.61</Marker>
                <Marker $color="#800080">ΔM1=29.45</Marker>
              </Markers>
              <Rule />
              <RunButton type="submit">
                <svg width="8" height="14"><path d="M0 0l8 7-8 7z" fill="#00e000" /></svg>
                Анализ
              </RunButton>
            </Settings>
          </Bottom>

          <StatusBar>
            <StatusCell $width="141px">USB Осциллограф не подключен</StatusCell>
            <StatusCell />
            <StatusCell $width="36px">2.1</StatusCell>
          </StatusBar>
        </Body>
        <Taskbar>
          <StartEdge />
          <TrayEdge />
        </Taskbar>
      </Window>
    </>
  );
};

export default App;
